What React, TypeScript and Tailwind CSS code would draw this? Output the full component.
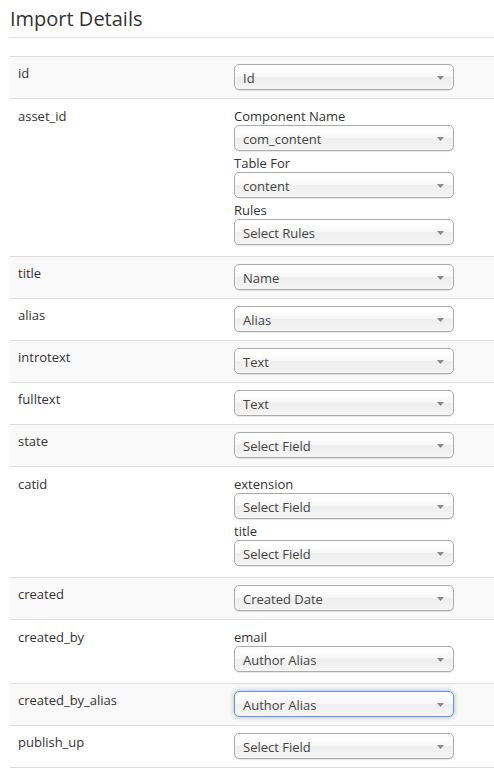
import type { ReactNode } from 'react';

type Group = { label?: string; value: string; focused?: boolean };
type Row = { field: string; groups: Group[] };

const rows: Row[] = [
  { field: 'id', groups: [{ value: 'Id' }] },
  {
    field: 'asset_id',
    groups: [
      { label: 'Component Name', value: 'com_content' },
      { label: 'Table For', value: 'content' },
      { label: 'Rules', value: 'Select Rules' },
    ],
  },
  { field: 'title', groups: [{ value: 'Name' }] },
  { field: 'alias', groups: [{ value: 'Alias' }] },
  { field: 'introtext', groups: [{ value: 'Text' }] },
  { field: 'fulltext', groups: [{ value: 'Text' }] },
  { field: 'state', groups: [{ value: 'Select Field' }] },
  {
    field: 'catid',
    groups: [
      { label: 'extension', value: 'Select Field' },
      { label: 'title', value: 'Select Field' },
    ],
  },
  { field: 'created', groups: [{ value: 'Created Date' }] },
  { field: 'created_by', groups: [{ label: 'email', value: 'Author Alias' }] },
  { field: 'created_by_alias', groups: [{ value: 'Author Alias', focused: true }] },
  { field: 'publish_up', groups: [{ value: 'Select Field' }] },
];

function Chosen({ value, focused = false, className = '' }: { value: string; focused?: boolean; className?: string }) {
  const ring = focused
    ? 'border-[#5897fb] shadow-[0_0_5px_rgba(0,0,0,0.3)]'
    : 'border-[#aaa] shadow-[inset_0_0_3px_#fff,0_1px_1px_rgba(0,0,0,0.1)]';
  return (
    <div
      className={`relative flex h-[26px] w-[220px] items-center rounded-[5px] border bg-[linear-gradient(#fff_20%,#f6f6f6_50%,#eee_52%,#f4f4f4_100%)] pl-2 pt-[2px] text-[13px] leading-[24px] text-[#444] ${ring} ${className}`}
    >
      <span>{value}</span>
      <svg className="absolute right-[9px] top-[11px]" width="7" height="4" viewBox="0 0 7 4">
        <path d="M0 0H7L3.5 4Z" fill="#888" />
      </svg>
    </div>
  );
}

function Cell({ children, className = '' }: { children: ReactNode; className?: string }) {
  return <div className={`px-2 ${className}`}>{children}</div>;
}

export default function App() {
  return (
    <div className="min-h-[768px] bg-white pl-[10px] font-['Open_Sans',sans-serif] text-[13px] leading-[18px] text-[#333]">
      <h3 className="mb-[18px] border-b border-[#e5e5e5] text-[20px] leading-[37px] font-normal text-[#333]">
        Import Details
      </h3>
      <div className="border-b border-[#ddd]">
        {rows.map((row, i) => {
          const grouped = row.groups.some((g) => g.label);
          return (
            <div
              key={row.field}
              className={`grid grid-cols-[216px_1fr] border-t border-[#ddd] pb-2 ${grouped ? 'pt-2' : 'pt-[7px]'} ${i % 2 === 0 ? 'bg-[#f9f9f9]' : 'bg-white'}`}
            >
              <Cell>{row.field}</Cell>
              <Cell>
                {row.groups.map((g, j) => (
                  <div key={j} className={grouped ? 'mb-[3px]' : ''}>
                    {g.label ? <div className="h-[18px]">{g.label}</div> : null}
                    <Chosen value={g.value} focused={g.focused} />
                  </div>
                ))}
              </Cell>
            </div>
          );
        })}
      </div>
    </div>
  );
}
